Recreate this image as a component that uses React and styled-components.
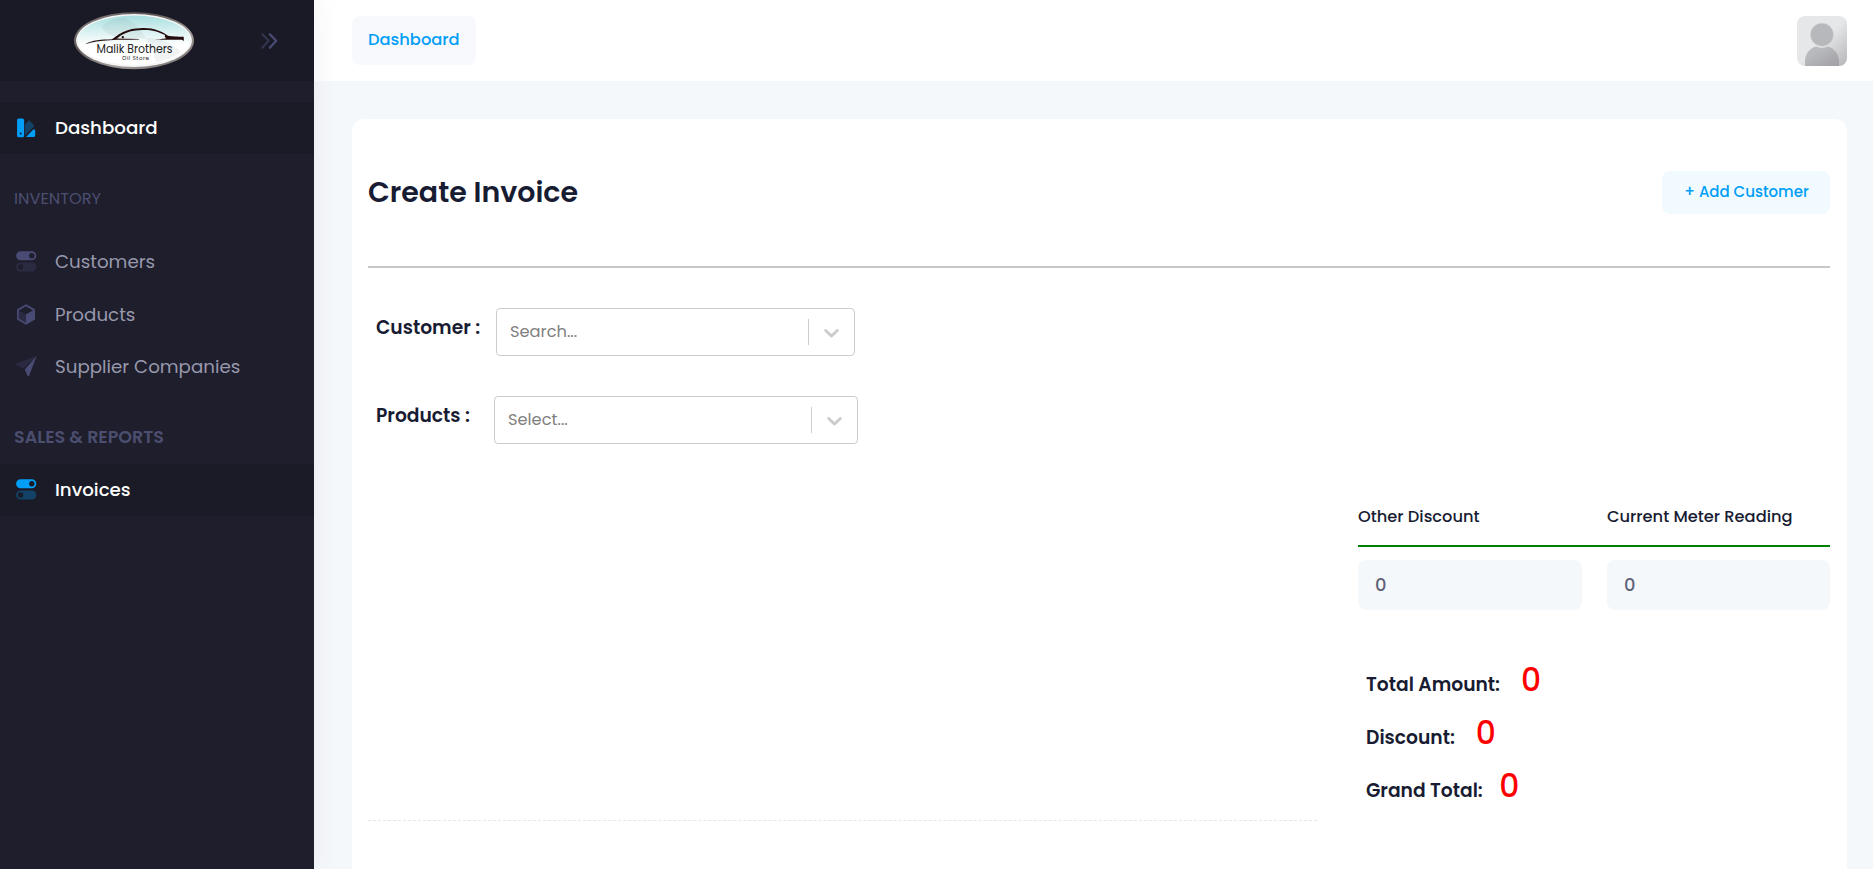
import React from 'react';
import styled, { createGlobalStyle } from 'styled-components';

const GlobalStyle = createGlobalStyle`
  *, *::before, *::after { box-sizing: border-box; }
  body {
    margin: 0;
    overflow: hidden;
    background: #f5f8fa;
    color: #181c32;
    font: 400 16.25px/1.5 Poppins, Inter, "Liberation Sans", sans-serif;
  }
  h1, h4, p { margin: 0; }
`;

const Shell = styled.div`
  display: flex;
  height: 100vh;
  overflow: hidden;
`;

const Sidebar = styled.aside`
  flex: 0 0 314px;
  background: #1e1e2d;
  box-shadow: 0 0 28px rgba(82, 63, 105, 0.07);
  z-index: 1;
`;

const Brand = styled.div`
  display: flex;
  align-items: center;
  justify-content: space-between;
  height: 81px;
  padding: 0 36px 0 74px;
  background: #1a1a27;

  svg { display: block; }
`;

const Menu = styled.nav`
  padding-top: 21px;
`;

const MenuItem = styled.div`
  display: flex;
  align-items: center;
  height: ${(p) => (p.$active ? 52 : 52.6)}px;
  padding-left: 15px;
  padding-bottom: ${(p) => (p.$active ? 1 : 0)}px;
  background: ${(p) => (p.$active ? '#1b1b28' : 'transparent')};
  color: ${(p) => (p.$active ? '#ffffff' : '#9899ac')};
  font-size: 18.25px;
  font-weight: ${(p) => (p.$active ? 500 : 400)};

  svg {
    flex: none;
    width: 23px;
    height: 23px;
    margin-right: 17px;
    fill: ${(p) => (p.$active ? '#009ef7' : '#494b74')};
  }
`;

const MenuHeading = styled.div`
  display: flex;
  align-items: ${(p) => (p.$strong ? 'flex-end' : 'flex-start')};
  height: ${(p) => (p.$strong ? 70.6 : 81.4)}px;
  padding: ${(p) => (p.$strong ? '0 14px 14px' : '32.5px 14px 0')};
  color: #4c4e6f;
  font-size: ${(p) => (p.$strong ? 17.5 : 16.25)}px;
  font-weight: ${(p) => (p.$strong ? 600 : 400)};
  text-transform: uppercase;
`;

const Content = styled.div`
  flex: 1;
  display: flex;
  flex-direction: column;
  min-width: 0;
`;

const TopBar = styled.header`
  flex: 0 0 81px;
  display: flex;
  align-items: flex-start;
  justify-content: space-between;
  padding: 16px 26px 0 38px;
  background: #ffffff;
`;

const Crumb = styled.a`
  display: flex;
  align-items: center;
  width: 124px;
  height: 49px;
  padding: 0 15px 1px 16px;
  border-radius: 8px;
  background: #f7f9fc;
  color: #009ef7;
  font-size: 16.3px;
  font-weight: 500;
`;

const Avatar = styled.svg`
  display: block;
  width: 50px;
  height: 50px;
  border-radius: 8px;
`;

const Card = styled.main`
  flex: 1;
  min-height: 0;
  margin: 38px 26px 0 38px;
  padding: 0 17px 0 16px;
  border-radius: 12px 12px 0 0;
  background: #ffffff;
`;

const CardHeader = styled.div`
  display: flex;
  align-items: center;
  justify-content: space-between;
  height: 149px;
  border-bottom: 2px solid #c8c7cc;
`;

const Title = styled.h1`
  font-size: 28.45px;
  font-weight: 600;
  line-height: 1.2;
`;

const LightButton = styled.button`
  width: 168px;
  height: 43px;
  padding: 0 0 0 1px;
  border: 0;
  border-radius: 8px;
  background: #f1faff;
  color: #009ef7;
  font: inherit;
  font-size: 15px;
  font-weight: 500;
`;

const Field = styled.div`
  display: flex;
  align-items: center;
  height: 48px;
  margin-top: 40px;
  padding-left: 8px;
`;

const FieldLabel = styled.h4`
  width: ${(p) => p.$width}px;
  padding-bottom: 7px;
  font-size: 18.69px;
  font-weight: 600;
  line-height: 1.2;
`;

const Select = styled.div`
  display: flex;
  align-items: center;
  width: ${(p) => p.$width}px;
  height: 48px;
  border: 1px solid #cccccc;
  border-radius: 4px;
  padding: 0 10px 0 13px;
  color: #808080;
`;

const Placeholder = styled.span`
  flex: 1;
`;

const Divider = styled.span`
  width: 1px;
  height: 26px;
  margin-right: 10px;
  background: #cccccc;
`;

const Chevron = styled.svg`
  display: block;
  width: 25px;
  height: 25px;
  fill: #cccccc;
`;

const Bottom = styled.section`
  display: grid;
  grid-template-columns: 949px 472px;
  justify-content: space-between;
`;

const LineItems = styled.div`
  height: 377px;
  border-bottom: 1px dashed #e4e6ef;
`;

const Readings = styled.div`
  display: grid;
  grid-template-columns: 224px 223px;
  column-gap: 25px;
`;

const ReadingHeads = styled(Readings)`
  height: 103px;
  padding-top: 61px;
  border-bottom: 2px solid #008000;
  font-weight: 500;
`;

const ReadingInputs = styled(Readings)`
  margin-top: 13px;
`;

const Input = styled.input`
  min-width: 0;
  height: 50px;
  padding: 0 17px 2px;
  border: 0;
  border-radius: 8px;
  outline: 0;
  background: #f5f8fa;
  color: #5e6278;
  font: inherit;
  font-size: 17.9px;
  font-weight: 500;
`;

const Totals = styled.div`
  margin-top: 45px;
  padding-left: 8px;
`;

const TotalRow = styled.div`
  display: flex;
  align-items: baseline;
  gap: ${(p) => p.$gap}px;
  height: 53px;
`;

const TotalLabel = styled.h4`
  font-size: 18.69px;
  font-weight: 600;
  line-height: 1.2;
`;

const TotalValue = styled.span`
  color: #ff0000;
  font-size: 31.4px;
  font-weight: 500;
  line-height: 50px;
`;

function Logo() {
  return (
    <svg width="121" height="58" viewBox="0 0 121 58">
      <defs>
        <linearGradient id="rim" x1="0" y1="0" x2="1" y2="1">
          <stop offset="0" stopColor="#8b8887" />
          <stop offset=".35" stopColor="#5d5654" />
          <stop offset=".65" stopColor="#a19c99" />
          <stop offset="1" stopColor="#696361" />
        </linearGradient>
        <linearGradient id="sky" x1="0" y1="0" x2="0" y2="1">
          <stop offset="0" stopColor="#a9dfe0" />
          <stop offset=".4" stopColor="#e4f5f5" />
          <stop offset=".6" stopColor="#ffffff" />
        </linearGradient>
      </defs>
      <ellipse cx="60" cy="28.7" rx="60" ry="28.5" fill="url(#rim)" />
      <ellipse cx="60" cy="28.5" rx="57.9" ry="26.4" fill="#f5f5f5" />
      <ellipse cx="60" cy="28.3" rx="56" ry="24.7" fill="url(#sky)" />
      <path d="M28 15C32 8 44 6 51 6c12 5 24 19 31 44 10-2 19-5 25-10C98 31 88 27 76 26 61 27 33 28 28 15z" fill="#728a8a" opacity=".1" />
      <path d="M11 32.3c7-4.5 17-4.6 27-5 6-4 12-11 31-11.3 11-.2 18 3 25 7.700 5 .7 11 1 15.700 1.100l.2 4.100-2-1.100H81c6-.1 7-1.200 11-1.200-1-1.500-1.500-2.500-1-3.600-7-3.600-13-5.300-22-5.100-14 .2-21 4-26 8.600l22 .5v.4c-20 .5-40-.4-54 4.900z" fill="#240b0d" />
      <circle cx="48.8" cy="25.1" r="1.2" fill="#240b0d" />
      <text x="22.5" y="41.1" fontFamily="Poppins, Inter, sans-serif" fontSize="11.5" fill="#222222" textLength="76" lengthAdjust="spacingAndGlyphs">Malik Brothers</text>
      <text x="48" y="48.2" fontFamily="Poppins, Inter, sans-serif" fontSize="5.6" fill="#222222" textLength="27" lengthAdjust="spacing">Oil Store</text>
    </svg>
  );
}

function CollapseIcon() {
  return (
    <svg width="17" height="18" viewBox="0 0 17 18" fill="none" strokeWidth="2.2" strokeLinejoin="round" strokeLinecap="round">
      <path d="M1.3 2.2L7.6 8.8 1.3 15.8" stroke="#494b74" opacity=".5" />
      <path d="M8.8 2.2L15.2 8.8 8.8 15.8" stroke="#494b74" />
    </svg>
  );
}

const icons = {
  swatch: (
    <svg viewBox="0 0 23 23">
      <path fillRule="evenodd" d="M3.5 2.5h4A1.600 1.600 0 0 1 9.100 4v15.800a1.500 1.500 0 0 1-1.500 1.500H3.600A1.500 1.500 0 0 1 2.100 19.800V4a1.500 1.500 0 0 1 1.400-1.500zM5.700 16.500a1 1 0 1 0 0 2 1 1 0 0 0 0-2z" />
      <path opacity=".3" d="M10 8.200l3.200-3.200a1.200 1.200 0 0 1 1.700 0l3.900 4a1.200 1.200 0 0 1 0 1.700L10 19.500z" />
      <path d="M11 20.900l7.300-7.300h1a1 1 0 0 1 .9 1V19.500a1.400 1.400 0 0 1-1.400 1.400z" />
    </svg>
  ),
  toggles: (
    <svg viewBox="0 0 23 23">
      <path fillRule="evenodd" d="M5.600 1.300h11.200a4.500 4.500 0 0 1 0 9H5.600a4.500 4.500 0 0 1 0-9zM16.800 3.100a2.700 2.700 0 1 0 0 5.400 2.700 2.700 0 0 0 0-5.400z" />
      <path opacity=".3" fillRule="evenodd" d="M5.600 12.500h11.200a4.500 4.500 0 0 1 0 9H5.600a4.500 4.500 0 0 1 0-9zM5.600 14.300a2.700 2.700 0 1 0 0 5.400 2.700 2.700 0 0 0 0-5.400z" />
    </svg>
  ),
  cube: (
    <svg viewBox="0 0 23 23">
      <path opacity=".3" d="M3.400 7.200L11 11.400v8.500l-7.600-4.200z" />
      <path fillRule="evenodd" d="M11 1.300l9 5v10.300l-9 5.100-9-5.100V6.300zM11 3.300L3.700 7.400v8.200L11 19.700v-8.400l7-3.900z" />
    </svg>
  ),
  plane: (
    <svg viewBox="0 0 23 23">
      <path opacity=".3" d="M21.600.9L8.300 13.600 1.100 9.800a.6.600 0 0 1 .1-1.100z" />
      <path d="M21.700.8L14 20.900a.8.800 0 0 1-1.400.1L9.800 14.500z" />
    </svg>
  ),
};

function Item({ icon, active, children }) {
  return (
    <MenuItem $active={active}>
      {icons[icon]}
      {children}
    </MenuItem>
  );
}

function SelectBox({ width, children }) {
  return (
    <Select $width={width}>
      <Placeholder>{children}</Placeholder>
      <Divider />
      <Chevron viewBox="0 0 20 20">
        <path d="M4.516 7.548c0.436-0.446 1.043-0.481 1.576 0l3.908 3.747 3.908-3.747c0.533-0.481 1.141-0.446 1.574 0 0.436 0.445 0.408 1.197 0 1.615-0.406 0.418-4.695 4.502-4.695 4.502-0.217 0.223-0.502 0.335-0.787 0.335s-0.570-0.112-0.789-0.335c0 0-4.287-4.084-4.695-4.502s-0.436-1.170 0-1.615z" />
      </Chevron>
    </Select>
  );
}

function UserAvatar() {
  return (
    <Avatar viewBox="0 0 50 50">
      <defs>
        <linearGradient id="avatarBg" x1="0" y1="0" x2="1" y2="1">
          <stop offset=".5" stopColor="#e6e7e8" />
          <stop offset="1" stopColor="#b5b5b8" />
        </linearGradient>
        <linearGradient id="avatarFg" x1="0" y1="0" x2="1" y2="1">
          <stop offset=".3" stopColor="#b9babd" />
          <stop offset="1" stopColor="#9f9fa4" />
        </linearGradient>
      </defs>
      <rect width="50" height="50" fill="url(#avatarBg)" />
      <path d="M8 50v-5c0-7 5-13 11-14.500q6 2.800 12 0C37 32 42 38 42 45v5z" fill="url(#avatarFg)" />
      <circle cx="25" cy="18.700" r="11.700" fill="#b7b8bb" stroke="#e1e2e3" strokeWidth=".6" />
    </Avatar>
  );
}

export default function App() {
  return (
    <>
      <GlobalStyle />
      <Shell>
        <Sidebar>
          <Brand>
            <Logo />
            <CollapseIcon />
          </Brand>
          <Menu>
            <Item icon="swatch" active>Dashboard</Item>
            <MenuHeading>Inventory</MenuHeading>
            <Item icon="toggles">Customers</Item>
            <Item icon="cube">Products</Item>
            <Item icon="plane">Supplier Companies</Item>
            <MenuHeading $strong>Sales &amp; Reports</MenuHeading>
            <Item icon="toggles" active>Invoices</Item>
          </Menu>
        </Sidebar>
        <Content>
          <TopBar>
            <Crumb>Dashboard</Crumb>
            <UserAvatar />
          </TopBar>
          <Card>
            <CardHeader>
              <Title>Create Invoice</Title>
              <LightButton>+ Add Customer</LightButton>
            </CardHeader>
            <Field>
              <FieldLabel $width={120}>Customer :</FieldLabel>
              <SelectBox width={359}>Search...</SelectBox>
            </Field>
            <Field>
              <FieldLabel $width={118}>Products :</FieldLabel>
              <SelectBox width={364}>Select...</SelectBox>
            </Field>
            <Bottom>
              <LineItems />
              <div>
                <ReadingHeads>
                  <span>Other Discount</span>
                  <span>Current Meter Reading</span>
                </ReadingHeads>
                <ReadingInputs>
                  <Input defaultValue="0" />
                  <Input defaultValue="0" />
                </ReadingInputs>
                <Totals>
                  <TotalRow $gap={21}>
                    <TotalLabel>Total Amount:</TotalLabel>
                    <TotalValue>0</TotalValue>
                  </TotalRow>
                  <TotalRow $gap={21}>
                    <TotalLabel>Discount:</TotalLabel>
                    <TotalValue>0</TotalValue>
                  </TotalRow>
                  <TotalRow $gap={16.5}>
                    <TotalLabel>Grand Total:</TotalLabel>
                    <TotalValue>0</TotalValue>
                  </TotalRow>
                </Totals>
              </div>
            </Bottom>
          </Card>
        </Content>
      </Shell>
    </>
  );
}
